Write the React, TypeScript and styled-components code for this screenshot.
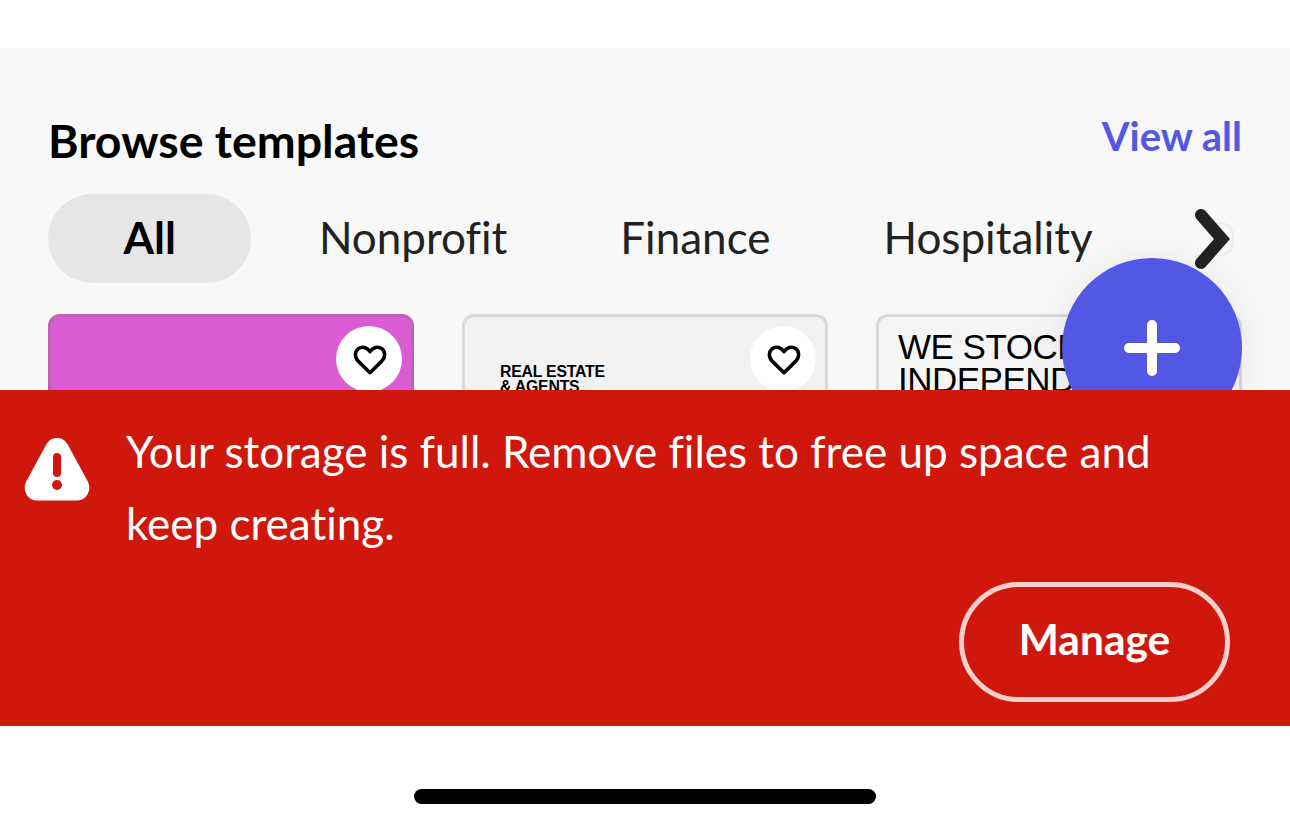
import React from 'react'
import styled, { createGlobalStyle } from 'styled-components'

const GlobalStyle = createGlobalStyle`
  html, body {
    margin: 0;
    padding: 0;
    background: #fff;
  }
  body {
    font-family: "Lato", "Open Sans", "Liberation Sans", sans-serif;
    font-variant-ligatures: none;
  }
`

const Page = styled.div`
  width: 1290px;
  height: 828px;
  display: flex;
  flex-direction: column;
  overflow: hidden;
  background: #fff;
`

const StatusBar = styled.div`
  height: 48px;
  flex: none;
`

const Panel = styled.section`
  position: relative;
  height: 342px;
  flex: none;
  box-sizing: border-box;
  padding: 66px 48px 0;
  background: #f8f8f8;
  overflow: hidden;
`

const HeaderRow = styled.div`
  display: flex;
  justify-content: space-between;
  align-items: flex-start;
  height: 80px;
`

const Title = styled.h2`
  margin: 0;
  font-size: 46.5px;
  line-height: 52px;
  font-weight: 700;
  color: #000;
`

const ViewAll = styled.a`
  font-size: 40px;
  line-height: 44px;
  font-weight: 700;
  color: #5258e4;
`

const TabRow = styled.div`
  display: flex;
  height: 89px;
`

const Tab = styled.div<{ $active?: boolean }>`
  flex: none;
  height: 89px;
  box-sizing: border-box;
  margin-right: ${({ $active }) => ($active ? '11px' : '0')};
  padding: 0 ${({ $active }) => ($active ? '75.5px' : '56.5px')} 4px;
  display: flex;
  align-items: center;
  border-radius: 45px;
  font-size: 44px;
  font-weight: ${({ $active }) => ($active ? 700 : 400)};
  color: ${({ $active }) => ($active ? '#000' : '#222')};
  background: ${({ $active }) => ($active ? '#e6e6e6' : 'transparent')};
`

const FadedChip = styled.div`
  position: absolute;
  left: 1196px;
  top: 174px;
  width: 38px;
  height: 34px;
  box-sizing: border-box;
  border: 2px solid #ececec;
  border-left: none;
  border-radius: 0 14px 14px 0;
`

const Chevron = styled.svg`
  position: absolute;
  left: 1190px;
  top: 158px;
  width: 46px;
  height: 66px;
`

const CardRow = styled.div`
  display: flex;
  gap: 48px;
  margin-top: 31px;
`

const Card = styled.div<{ $bg: string; $border: string }>`
  position: relative;
  flex: none;
  box-sizing: border-box;
  width: 366px;
  height: 300px;
  border: 3px solid ${({ $border }) => $border};
  border-radius: 12px;
  background: ${({ $bg }) => $bg};
`

const HeartButton = styled.div`
  position: absolute;
  top: 9px;
  right: 9px;
  width: 66px;
  height: 66px;
  display: flex;
  align-items: center;
  justify-content: center;
  border-radius: 50%;
  background: #fff;
`

const HeartIcon = styled.svg`
  width: 34px;
  height: 30px;
  margin: 1px 0 0 1px;
`

const SmallCaption = styled.div`
  margin: 47px 0 0 35px;
  font-family: "Liberation Sans", sans-serif;
  font-size: 15.8px;
  line-height: 15px;
  font-weight: 700;
  letter-spacing: -0.2px;
  color: #000;
`

const BigCaption = styled.div`
  margin: 13px 0 0 19px;
  font-family: "Liberation Sans", sans-serif;
  font-size: 35px;
  line-height: 33px;
  letter-spacing: -0.5px;
  color: #000;
  white-space: nowrap;
`

const Fab = styled.div`
  position: absolute;
  left: 1062px;
  top: 210px;
  width: 180px;
  height: 180px;
  display: flex;
  align-items: center;
  justify-content: center;
  border-radius: 50%;
  background: #5258e4;
  box-shadow: 0 4px 36px rgba(0, 0, 0, 0.08);
`

const Banner = styled.section`
  height: 336px;
  flex: none;
  box-sizing: border-box;
  padding: 25px 60px 0 24px;
  display: flex;
  flex-direction: column;
  background: #d0170c;
  color: #fff;
`

const Message = styled.div`
  display: flex;
  align-items: flex-start;
  gap: 36px;
`

const WarningIcon = styled.svg`
  flex: none;
  width: 66px;
  height: 63px;
  margin-top: 23px;
`

const MessageText = styled.p`
  margin: 0;
  font-size: 44px;
  line-height: 72px;
  font-weight: 400;
`

const ManageButton = styled.button`
  align-self: flex-end;
  box-sizing: border-box;
  width: 271px;
  height: 120px;
  margin-top: 23px;
  padding: 0 0 8px;
  border: 5px solid #f9cfcc;
  border-radius: 60px;
  background: transparent;
  font-family: inherit;
  font-variant-ligatures: none;
  font-size: 42.5px;
  font-weight: 700;
  color: #fff;
`

const Footer = styled.div`
  flex: 1;
  display: flex;
  justify-content: center;
  align-items: flex-start;
  padding-top: 63px;
`

const HomeIndicator = styled.div`
  width: 462px;
  height: 15px;
  border-radius: 8px;
  background: #000;
`

const tabs = [
  { label: 'All', active: true },
  { label: 'Nonprofit' },
  { label: 'Finance' },
  { label: 'Hospitality' },
]

const Heart = () => (
  <HeartIcon viewBox="0 0 36 32" fill="none" stroke="#000" strokeWidth="3.8" strokeLinejoin="round">
    <path d="M18 29.5 5.4 17.2C1 12.7 1.8 6.6 5.6 3.8c3.9-2.8 9.3-1.5 12.4 3.3 3.1-4.8 8.5-6.1 12.4-3.3 3.8 2.8 4.6 8.9.2 13.4Z" />
  </HeartIcon>
)

const Plus = () => (
  <svg width="56" height="56" viewBox="0 0 56 56" fill="none" stroke="#fff" strokeWidth="10" strokeLinecap="round">
    <path d="M28 5v46M5 28h46" />
  </svg>
)

export default function App() {
  return (
    <Page>
      <GlobalStyle />
      <StatusBar />
      <Panel>
        <HeaderRow>
          <Title>Browse templates</Title>
          <ViewAll>View all</ViewAll>
        </HeaderRow>
        <TabRow>
          {tabs.map((tab) => (
            <Tab key={tab.label} $active={tab.active}>
              {tab.label}
            </Tab>
          ))}
        </TabRow>
        <FadedChip />
        <Chevron viewBox="0 0 46 66" fill="none" stroke="#222" strokeWidth="12" strokeLinecap="round" strokeLinejoin="miter">
          <path d="M11 9 32 33 11 57" />
        </Chevron>
        <CardRow>
          <Card $bg="#db5cd5" $border="#c15fb9">
            <HeartButton>
              <Heart />
            </HeartButton>
          </Card>
          <Card $bg="#f2f2f2" $border="#d9dbe2">
            <SmallCaption>
              REAL ESTATE
              <br />& AGENTS
            </SmallCaption>
            <HeartButton>
              <Heart />
            </HeartButton>
          </Card>
          <Card $bg="#f5f5f5" $border="#d9d9dc">
            <BigCaption>
              WE STOCK
              <br />
              INDEPEND
            </BigCaption>
          </Card>
        </CardRow>
        <Fab>
          <Plus />
        </Fab>
      </Panel>
      <Banner>
        <Message>
          <WarningIcon viewBox="0 0 66 63">
            <path
              fill="#fff"
              d="M33 0c5 0 8.500 2.500 11 7l19.500 36c5 9-1 19.500-10.500 19.500H13C3.500 62.500-2.500 52 2.500 43L22 7c2.500-4.500 6-7 11-7Z"
            />
            <rect x="29" y="15" width="8" height="24" rx="4" fill="#d0170c" />
            <circle cx="33" cy="47" r="5" fill="#d0170c" />
          </WarningIcon>
          <MessageText>
            Your storage is full. Remove files to free up space and
            <br />
            keep creating.
          </MessageText>
        </Message>
        <ManageButton>Manage</ManageButton>
      </Banner>
      <Footer>
        <HomeIndicator />
      </Footer>
    </Page>
  )
}
